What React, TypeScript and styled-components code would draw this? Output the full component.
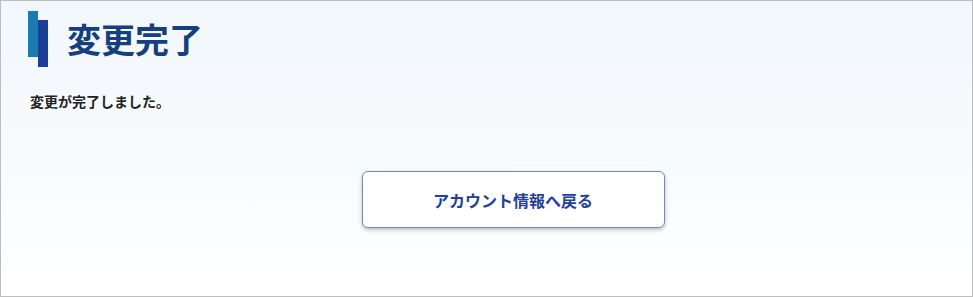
import React from "react";
import styled, { createGlobalStyle } from "styled-components";

const GlobalStyle = createGlobalStyle`
  html, body {
    margin: 0;
    padding: 0;
  }
  body {
    font-family: "Noto Sans CJK JP", "Noto Sans", sans-serif;
  }
`;

const App = () => {
  return (
    <>
      <GlobalStyle />
      <Frame>
        <Heading>
          <Marker>
            <LightBar />
            <DarkBar />
          </Marker>
          <Title>変更完了</Title>
        </Heading>
        <Message>変更が完了しました。</Message>
        <ButtonRow>
          <BackButton type="button">アカウント情報へ戻る</BackButton>
        </ButtonRow>
      </Frame>
    </>
  );
};

export default App;

const Frame = styled.div`
  width: 973px;
  height: 297px;
  box-sizing: border-box;
  border: 1px solid #bdbdbd;
  background: linear-gradient(180deg, #f2f7fc 0%, #f8fbfd 55%, #ffffff 100%);
  padding: 10px 0 0 27px;
  overflow: hidden;
`;

const Heading = styled.div`
  display: flex;
  align-items: center;
`;

const Marker = styled.div`
  display: flex;
  height: 56px;
`;

const LightBar = styled.span`
  width: 10px;
  height: 46px;
  background-color: #1a7bb0;
  align-self: flex-start;
`;

const DarkBar = styled.span`
  width: 10px;
  height: 47px;
  background-color: #1b3f98;
  align-self: flex-end;
`;

const Title = styled.h1`
  margin: 0 0 0 19px;
  font-size: 34px;
  line-height: 1;
  font-weight: 700;
  color: #163f7e;
`;

const Message = styled.p`
  margin: 24px 0 0 2px;
  font-size: 14px;
  line-height: 20px;
  font-weight: 700;
  color: #222222;
`;

const ButtonRow = styled.div`
  display: flex;
  justify-content: center;
  padding-left: 26px;
  margin-top: 60px;
`;

const BackButton = styled.button`
  width: 303px;
  height: 57px;
  box-sizing: border-box;
  border: 1px solid #6d8bc6;
  border-radius: 6px;
  background-color: #ffffff;
  box-shadow: 0 2px 4px rgba(0, 0, 0, 0.25);
  font-family: "Noto Sans CJK JP", "Noto Sans", sans-serif;
  font-size: 16px;
  font-weight: 700;
  color: #22409a;
  cursor: pointer;
`;
